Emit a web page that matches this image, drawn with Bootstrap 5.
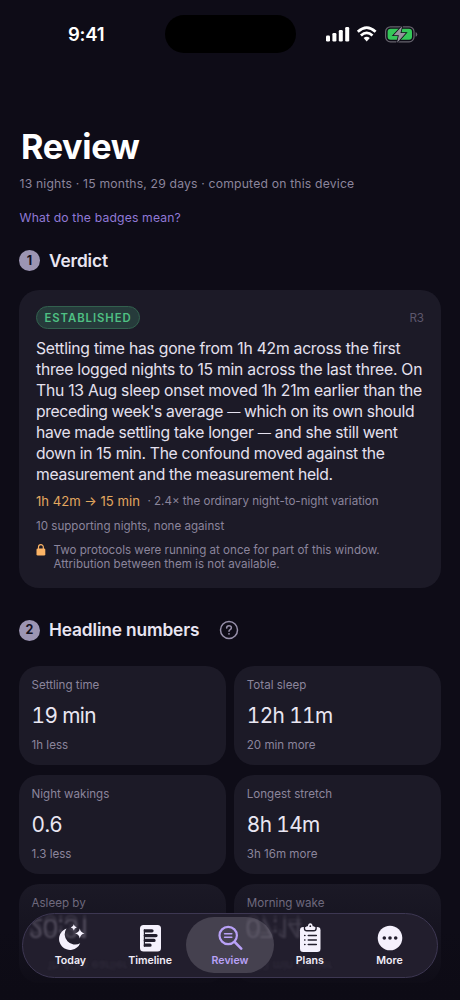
<!DOCTYPE html>
<html lang="en">
<head>
<meta charset="utf-8">
<meta name="viewport" content="width=device-width, initial-scale=1">
<title>Review</title>
<link href="https://cdn.jsdelivr.net/npm/bootstrap@5.3.0/dist/css/bootstrap.min.css" rel="stylesheet">
<style>
html,body{height:1000px;overflow:hidden}
body{background:#0e0c17;color:#e9e6f2;font-family:Inter,"Liberation Sans",sans-serif;font-size:12.2px;line-height:14px}
.screen{width:460px;height:1000px;overflow:hidden}
.status{height:68px;padding:0 42px 0 68px}
.clock{font-size:18.5px;font-weight:600;color:#fff;letter-spacing:-.25px;width:97px}
.island{width:131px;height:38px;border-radius:19px;background:#000}
.page-main{padding:59px 19px 0}
.title{font-size:34.2px;font-weight:700;line-height:40px;color:#fff;letter-spacing:-.35px;margin:0 0 0 2px}
.dim{color:#8b859c}
.sub{font-size:12.2px;letter-spacing:.18px;margin-top:10px;line-height:14px;padding-left:.5px}
.badge-link{font-size:12.2px;letter-spacing:.15px;color:#9079d6;margin-top:19px;line-height:15px;padding-left:.5px}
.sec-row{gap:9px}
.sec-one{margin-top:24.5px}
.sec-two{margin-top:31px}
.help-icon{margin-left:10.5px}
.num{width:21px;height:21px;border-radius:50%;background:#9c95b3;color:#14111e;font-weight:700;font-size:12.5px}
.sec{font-size:17.3px;font-weight:600;line-height:22px;margin:0;letter-spacing:-.12px}
.panel{background:#1c1a27;border-radius:20px}
.verdict{margin-top:18.5px;padding:16px 17px 0;height:298px}
.pill{height:23px;width:104px;border-radius:12px;background:#263b3b;border:1px solid #32614e;color:#4fc083;font-size:11.3px;font-weight:600;letter-spacing:.95px}
.rule-id{color:#5c576c;font-size:11.6px}
.body-text{font-size:15.7px;line-height:20.9px;letter-spacing:-.235px;margin:10.3px 0 0;color:#e5e1ef;white-space:nowrap}
.snug{letter-spacing:-.31px}
.snugger{letter-spacing:-.36px}
.dash{font-size:13.2px}
.evidence{margin-top:8.8px;gap:7.5px}
.gold{color:#e2a75f;font-size:13.1px;font-weight:400}
.meta{font-size:11.6px;letter-spacing:0}
.support{margin-top:11px}
.caveat{margin-top:11px;line-height:13.6px}
.lock{margin-right:7.5px}
.tiles{margin-top:25px;display:grid;grid-template-columns:1fr 1fr;column-gap:8.5px;row-gap:10.5px}
.tile{height:98.6px;padding:12px 12.5px}
.tile .lab{font-size:11.6px;letter-spacing:0;line-height:14px}
.tile .val{font-size:20.8px;line-height:26px;margin-top:10.5px;letter-spacing:-.6px;font-variant-numeric:tabular-nums}
.tile .delta{font-size:11.6px;line-height:14px;margin-top:9.5px}
.fade-out{left:0;bottom:0;width:460px;height:126px;background:linear-gradient(to bottom,rgba(14,12,23,0),rgba(14,12,23,.45) 45%,rgba(13,11,21,.96) 92%)}
.tabs{left:22px;top:913px;width:416px;height:65px;border-radius:33px;background:#221e2d;border:1px solid #3d3752;padding:3px 3px;overflow:hidden}
.tab{width:79.8px;color:#f1edf8;font-size:10.6px;font-weight:600;line-height:13px;position:relative}
.tab svg{display:block;margin-bottom:2px}
.tab.on{color:#b9a1f7}
.tab.on:before{content:"";position:absolute;left:-4px;right:-4px;top:0;bottom:1px;border-radius:29px;background:#45414f;z-index:-1}
.tabrow{z-index:1;height:57px}
.ghost{top:0;font-size:26px;line-height:28px;color:#b4adbf;filter:blur(1.1px);opacity:.32;letter-spacing:-1.6px;transform:scaleY(-1);text-shadow:0 4px 0 rgba(180,173,191,.45)}
.ghost-a{left:5px}
.ghost-b{left:222px;z-index:2;opacity:.2}
.ghost-low{top:44px;font-size:12px;line-height:14px;color:#a099ad;opacity:.1;filter:blur(1.2px);transform:scaleY(-1)}
.ghost-c{left:24px}
.ghost-d{left:234px}
</style>
</head>
<body>
<div class="screen position-relative">
  <header class="status d-flex align-items-center">
    <div class="clock">9:41</div>
    <div class="island"></div>
    <svg class="ms-auto" width="92" height="20" viewBox="0 0 92 20">
      <g fill="#fff"><rect x="0" y="11.5" width="4" height="6" rx="1.2"/><rect x="6.4" y="9" width="4" height="8.5" rx="1.2"/><rect x="12.8" y="6" width="4" height="11.5" rx="1.2"/><rect x="19.2" y="3" width="4" height="14.5" rx="1.2"/></g>
      <g fill="none" stroke="#fff" stroke-width="2.7"><path d="M31.8 7.8Q40.7 -.4 49.6 7.8"/><path d="M34.9 11.5Q40.7 6.2 46.5 11.5"/></g>
      <path d="M37.6 14Q40.7 11.5 43.8 14L40.7 17.4Z" fill="#fff"/>
      <rect x="59.6" y="2.8" width="28.4" height="15" rx="4.8" fill="none" stroke="#66636d" stroke-width="1.2"/>
      <rect x="61.6" y="4.8" width="24.4" height="11" rx="3" fill="#35c759"/>
      <path d="M89.6 8v4.8q1.7-.7 1.7-2.4t-1.7-2.4z" fill="#66636d"/>
      <path d="M76.2 2L67.6 11.2h5.2l-1.7 7.5 8.7-9.600h-5.300z" fill="#96949c" stroke="#0e0c17" stroke-width="1.600" paint-order="stroke"/>
    </svg>
  </header>
  <main class="page-main">
    <h1 class="title">Review</h1>
    <div class="sub dim">13 nights · 15 months, 29 days · computed on this device</div>
    <div class="badge-link">What do the badges mean?</div>
    <div class="sec-row sec-one d-flex align-items-center"><span class="num d-flex align-items-center justify-content-center">1</span><h2 class="sec">Verdict</h2></div>
    <section class="panel verdict">
      <div class="d-flex justify-content-between align-items-center"><span class="pill d-flex align-items-center justify-content-center">ESTABLISHED</span><span class="rule-id">R3</span></div>
      <p class="body-text">Settling time has gone from 1h 42m across the first<br>three logged nights to 15 min across the last three. On<br>Thu 13 Aug sleep onset moved 1h 21m earlier than the<br><span class="snugger">preceding week's average <span class="dash">—</span> which on its own should</span><br><span class="snug">have made settling take longer <span class="dash">—</span> and she still went<br>down in 15 min. The confound moved against the<br>measurement and the measurement held.</span></p>
      <div class="evidence d-flex align-items-center"><span class="gold">1h 42m → 15 min</span><span class="meta dim">· 2.4× the ordinary night-to-night variation</span></div>
      <div class="meta dim support">10 supporting nights, none against</div>
      <div class="caveat d-flex dim meta">
        <svg class="lock flex-shrink-0" width="10" height="13" viewBox="0 0 10 13"><rect x=".5" y="4.500" width="8.800" height="7" rx="1.300" fill="#fcb466"/><path d="M2.500 5V3.100a2.400 2.400 0 0 1 4.800 0V5" fill="none" stroke="#fcb466" stroke-width="1.200"/></svg>
        <div>Two protocols were running at once for part of this window.<br>Attribution between them is not available.</div>
      </div>
    </section>
    <div class="sec-row sec-two d-flex align-items-center"><span class="num d-flex align-items-center justify-content-center">2</span><h2 class="sec">Headline numbers</h2>
      <svg class="help-icon" width="20" height="20" viewBox="0 0 20 20" fill="none" stroke="#9790aa" stroke-width="1.500"><circle cx="10" cy="10" r="8.500"/><path d="M7.600 8.100q.1-2.300 2.400-2.300t2.400 2q0 1.100-1.200 1.800t-1.200 1.600" stroke-linecap="round"/><circle cx="10" cy="13.800" r=".9" fill="#9790aa" stroke="none"/></svg>
    </div>
    <section class="tiles">
      <div class="panel tile"><div class="lab dim">Settling time</div><div class="val">19 min</div><div class="delta dim">1h less</div></div>
      <div class="panel tile"><div class="lab dim">Total sleep</div><div class="val">12h 11m</div><div class="delta dim">20 min more</div></div>
      <div class="panel tile"><div class="lab dim">Night wakings</div><div class="val">0.6</div><div class="delta dim">1.3 less</div></div>
      <div class="panel tile"><div class="lab dim">Longest stretch</div><div class="val">8h 14m</div><div class="delta dim">3h 16m more</div></div>
      <div class="panel tile"><div class="lab dim">Asleep by</div></div>
      <div class="panel tile"><div class="lab dim">Morning wake</div></div>
    </section>
  </main>
  <div class="fade-out position-absolute"></div>
  <nav class="tabs position-absolute">
    <div class="tabrow d-flex justify-content-center position-relative">
      <a class="tab d-flex flex-column align-items-center justify-content-center text-decoration-none"><svg width="30" height="28" viewBox="0 0 30 28" fill="#f5f1fd"><path d="M11.500 4.500A11 11 0 1 0 25.200 19.200A10.300 10.300 0 0 1 11.500 4.500Z"/><path d="M18.800.2q.5 2.700 3 3.200-2.500.5-3 3.100-.5-2.600-3-3.100 2.500-.5 3-3.200zM24.800 4.600q.8 4.200 4.700 4.900-3.900.8-4.700 4.900-.8-4.100-4.700-4.900 3.900-.7 4.700-4.900z"/></svg><span>Today</span></a>
      <a class="tab d-flex flex-column align-items-center justify-content-center text-decoration-none"><svg width="24" height="28" viewBox="0 0 24 28"><rect x="2" y="1" width="21" height="26.500" rx="3.500" fill="#f5f1fd"/><path d="M7.300 6.800h6.700M7.300 11.600h10.700M7.300 16.400h8.700M7.300 21.200h4.700" stroke="#221e2d" stroke-width="3.300" stroke-linecap="round"/><path d="M6.400 5.200v17.500" stroke="#221e2d" stroke-width="1.200"/></svg><span>Timeline</span></a>
      <a class="tab on d-flex flex-column align-items-center justify-content-center text-decoration-none"><svg width="28" height="28" viewBox="0 0 28 28" fill="none" stroke="#b9a1f7" stroke-width="2.200" stroke-linecap="round"><circle cx="12.200" cy="11.500" r="8.700"/><path d="M18.600 17.900l6.600 6.700" stroke-width="2.700"/><path d="M8.600 9.800h7.200M8.600 13.300h7.200" stroke-width="1.600"/></svg><span>Review</span></a>
      <a class="tab d-flex flex-column align-items-center justify-content-center text-decoration-none"><svg width="24" height="28" viewBox="0 0 24 28" overflow="visible"><g transform="translate(0,-1)"><rect x="2" y="4" width="20.500" height="25" rx="3.300" fill="#f5f1fd"/><path d="M6.500 3.500v2q0 2.300 2.300 2.300h7q2.300 0 2.300-2.300v-2" fill="none" stroke="#221e2d" stroke-width="1.400"/><path d="M7.500 5.200q0-2 1.800-2h.6q.3-2.900 2.400-2.900t2.400 2.900h.6q1.800 0 1.800 2 0 1.300-1.300 1.300h-7q-1.300 0-1.300-1.300z" fill="#f5f1fd"/><circle cx="12.300" cy="3.200" r=".9" fill="#221e2d"/><g stroke="#221e2d" stroke-width="1.600" stroke-linecap="round"><path d="M10.300 12.500h8M10.300 17h8M10.300 21.500h8"/><path d="M6.700 12.500h.2M6.700 17h.2M6.700 21.500h.2"/></g></g></svg><span>Plans</span></a>
      <a class="tab d-flex flex-column align-items-center justify-content-center text-decoration-none"><svg width="26" height="28" viewBox="0 0 26 28"><circle cx="13" cy="14" r="12.300" fill="#f5f1fd"/><g fill="#221e2d"><circle cx="7.300" cy="14" r="1.800"/><circle cx="13" cy="14" r="1.800"/><circle cx="18.700" cy="14" r="1.800"/></g></svg><span>More</span></a>
    </div>
    <span class="ghost ghost-a position-absolute">20:31</span>
    <span class="ghost ghost-b position-absolute">07:14</span>
    <span class="ghost-low ghost-c position-absolute">1h 40m earlier</span><span class="ghost-low ghost-d position-absolute">13 min earlier</span>
  </nav>
</div>
<script src="https://cdn.jsdelivr.net/npm/bootstrap@5.3.0/dist/js/bootstrap.bundle.min.js"></script>
</body>
</html>
